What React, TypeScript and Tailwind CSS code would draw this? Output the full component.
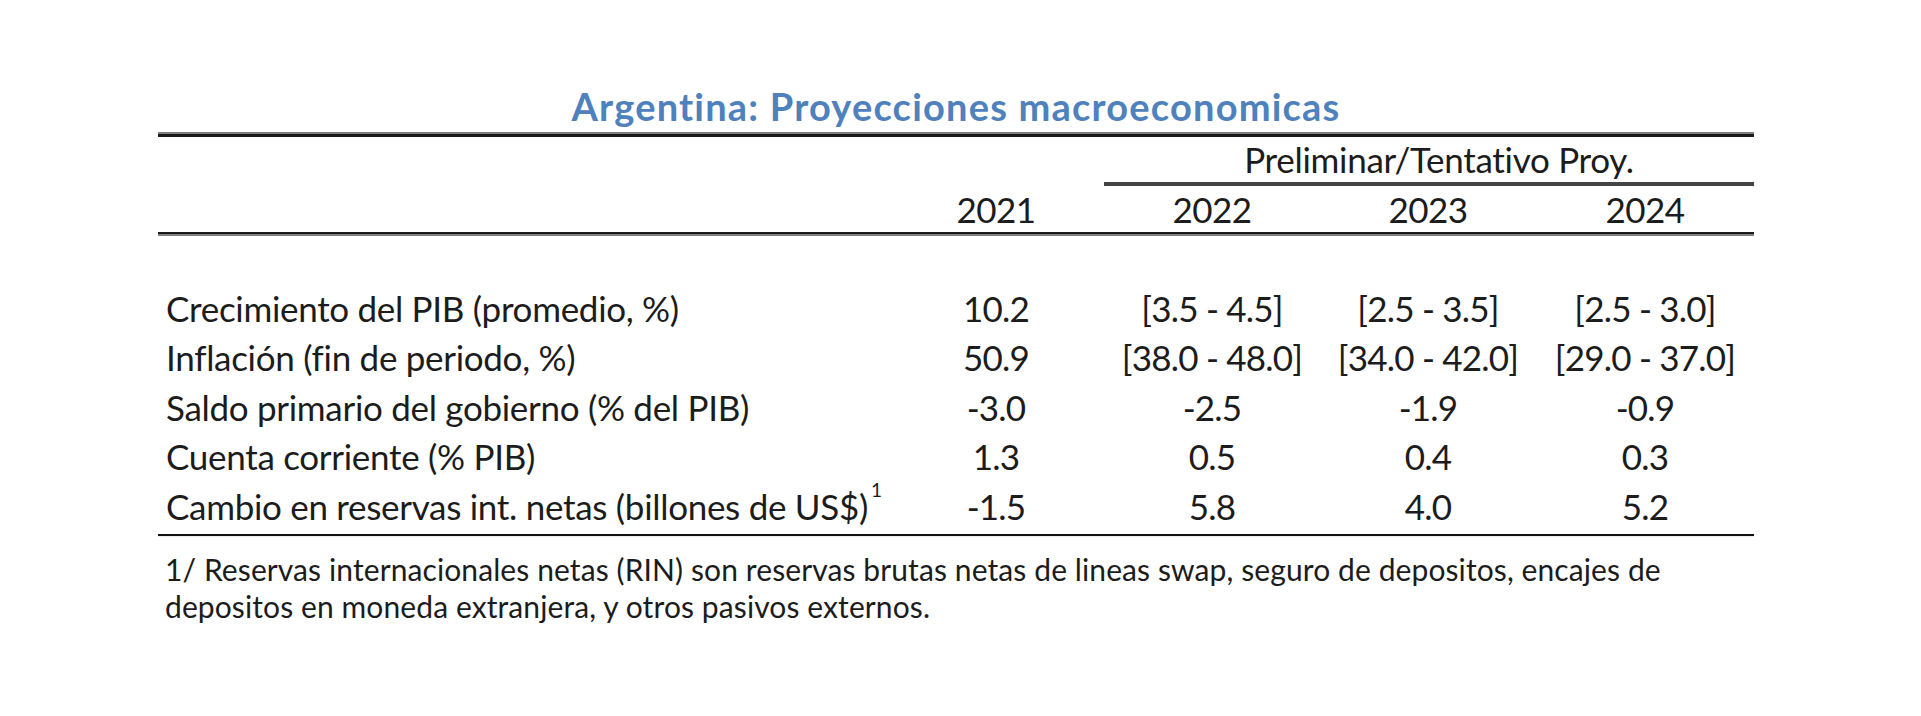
import React from "react";

const rows = [
  { label: "Crecimiento del PIB (promedio, %)", v: ["10.2", "[3.5 - 4.5]", "[2.5 - 3.5]", "[2.5 - 3.0]"] },
  { label: "Inflación (fin de periodo, %)", v: ["50.9", "[38.0 - 48.0]", "[34.0 - 42.0]", "[29.0 - 37.0]"] },
  { label: "Saldo primario del gobierno (% del PIB)", v: ["-3.0", "-2.5", "-1.9", "-0.9"] },
  { label: "Cuenta corriente (% PIB)", v: ["1.3", "0.5", "0.4", "0.3"] },
  { label: "Cambio en reservas int. netas (billones de US$)", v: ["-1.5", "5.8", "4.0", "5.2"], sup: "1" },
];

const grid = "grid grid-cols-[730px_216px_216px_216px_218px]";

export default function App() {
  return (
    <div className="w-[1921px] h-[716px] bg-white font-['Lato',sans-serif] text-[#1c1c1c] overflow-hidden">
      <div className="ml-[158px] w-[1596px] pt-[84px]">
        <div className="h-[44px] flex items-center justify-center text-[38px] tracking-[1.2px] font-bold text-[#4f81bd]">
          Argentina: Proyecciones macroeconomicas
        </div>
        <div className="mt-[4px] h-[2px] bg-[#7f7f7f]" />
        <div className="h-[3px] bg-[#1a1a1a]" />

        {/* header */}
        <div className={grid}>
          <div className="col-start-3 col-span-3 h-[45px] flex items-center justify-center pl-[20px] text-[35px] tracking-[-0.3px]">
            Preliminar/Tentativo Proy.
          </div>
          <div className="col-start-3 col-span-3 h-[4px] bg-[#444444]" />
          <div className="h-[46px]" />
          {["2021", "2022", "2023", "2024"].map((y) => (
            <div key={y} className="h-[46px] flex items-center justify-center text-[35px] tracking-[-0.6px]">
              {y}
            </div>
          ))}
        </div>
        <div className="h-[2px] bg-[#1a1a1a]" />
        <div className="h-[2px] bg-[#808080]" />

        {/* body */}
        <div className="pt-[47px]">
          {rows.map((r) => (
            <div key={r.label} className={grid}>
              <div className="h-[49.5px] flex items-center pl-[8px] text-[35px] tracking-[-0.3px] whitespace-nowrap">
                {r.label}
                {r.sup && <sup className="text-[19px] ml-[3px] -mt-[12px]">{r.sup}</sup>}
              </div>
              {r.v.map((v, i) => (
                <div key={i} className="h-[49.5px] flex items-center justify-center text-[35px] tracking-[-0.8px] whitespace-nowrap">
                  {v}
                </div>
              ))}
            </div>
          ))}
        </div>
        <div className="mt-[3px] h-[2px] bg-[#111111]" />
        <div className="h-[1px] bg-[#eeeeee]" />

        {/* footnote */}
        <div className="mt-[14px] pl-[7px] text-[30px] tracking-[0.1px] leading-[37px] whitespace-nowrap">
          <div>1/ Reservas internacionales netas (RIN) son reservas brutas netas de lineas swap, seguro de depositos, encajes de</div>
          <div>depositos en moneda extranjera, y otros pasivos externos.</div>
        </div>
      </div>
    </div>
  );
}
